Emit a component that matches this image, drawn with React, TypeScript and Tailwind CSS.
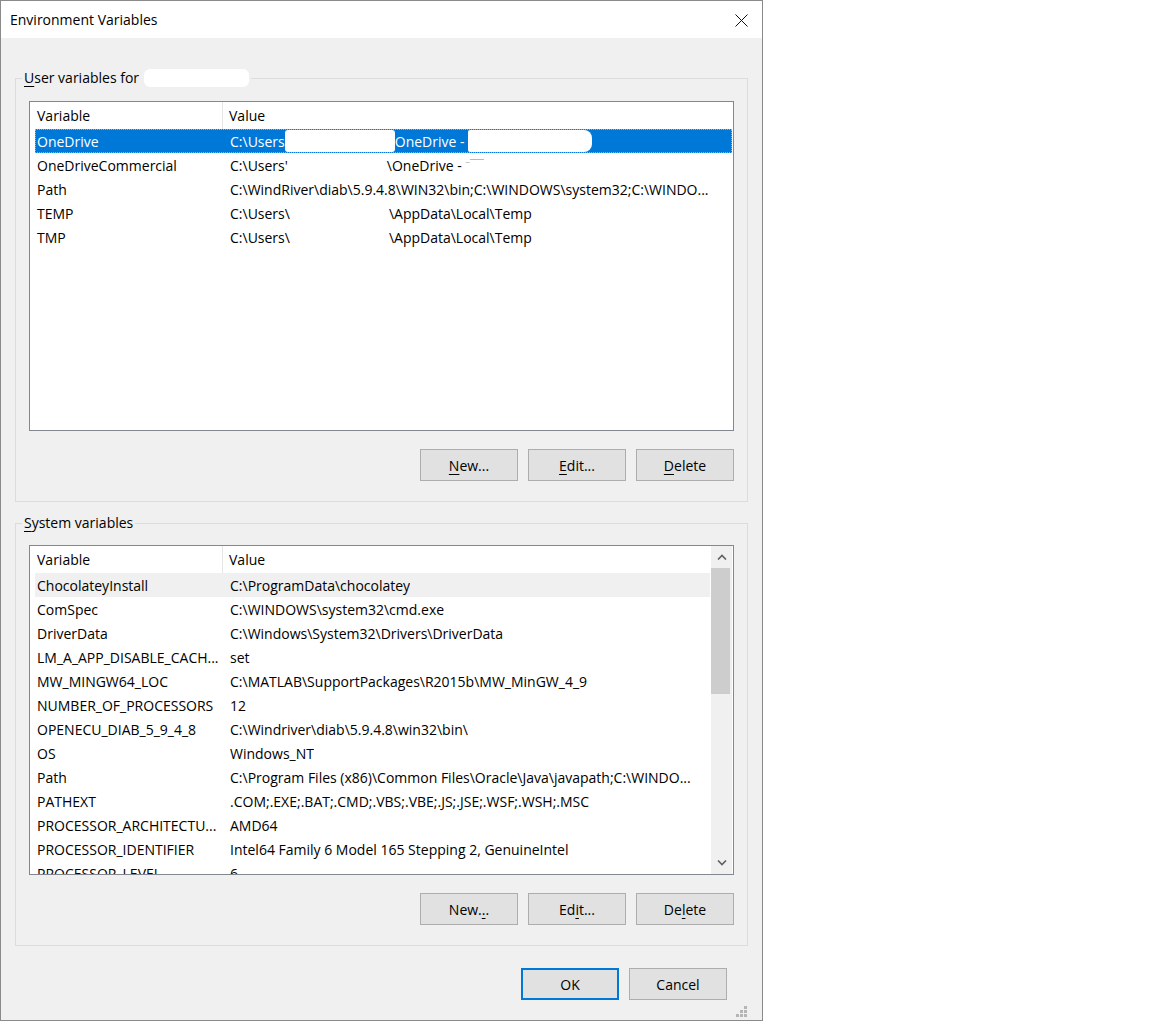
import React from "react";

type Row = { name: string; value: React.ReactNode };

const blob = (w: number) => <span className="inline-block" style={{ width: w }} />;

const userRows: Row[] = [
  {
    name: "OneDrive",
    value: (
      <span className="flex items-center">
        <span>C:\Users</span>
        <span className="inline-block h-[22px] w-[110px] rounded-[3px] bg-white" />
        <span>OneDrive -</span>
        <span className="ml-[3px] inline-block h-[22px] w-[124px] rounded-r-[8px] rounded-l-[2px] bg-white" />
      </span>
    ),
  },
  {
    name: "OneDriveCommercial",
    value: (
      <span className="flex items-center">
        <span>C:\Users'</span>
        {blob(99)}
        <span>\OneDrive - </span>
        <span className="text-[#b8b8b8]">&nbsp;⁻‾‾</span>
      </span>
    ),
  },
  { name: "Path", value: "C:\\WindRiver\\diab\\5.9.4.8\\WIN32\\bin;C:\\WINDOWS\\system32;C:\\WINDO..." },
  {
    name: "TEMP",
    value: (
      <span className="flex items-center">
        <span>C:\Users\</span>
        {blob(99)}
        <span>\AppData\Local\Temp</span>
      </span>
    ),
  },
  {
    name: "TMP",
    value: (
      <span className="flex items-center">
        <span>C:\Users\</span>
        {blob(99)}
        <span>\AppData\Local\Temp</span>
      </span>
    ),
  },
];

const sysRows: Row[] = [
  { name: "ChocolateyInstall", value: "C:\\ProgramData\\chocolatey" },
  { name: "ComSpec", value: "C:\\WINDOWS\\system32\\cmd.exe" },
  { name: "DriverData", value: "C:\\Windows\\System32\\Drivers\\DriverData" },
  { name: "LM_A_APP_DISABLE_CACH...", value: "set" },
  { name: "MW_MINGW64_LOC", value: "C:\\MATLAB\\SupportPackages\\R2015b\\MW_MinGW_4_9" },
  { name: "NUMBER_OF_PROCESSORS", value: "12" },
  { name: "OPENECU_DIAB_5_9_4_8", value: "C:\\Windriver\\diab\\5.9.4.8\\win32\\bin\\" },
  { name: "OS", value: "Windows_NT" },
  { name: "Path", value: "C:\\Program Files (x86)\\Common Files\\Oracle\\Java\\javapath;C:\\WINDO..." },
  { name: "PATHEXT", value: ".COM;.EXE;.BAT;.CMD;.VBS;.VBE;.JS;.JSE;.WSF;.WSH;.MSC" },
  { name: "PROCESSOR_ARCHITECTU...", value: "AMD64" },
  { name: "PROCESSOR_IDENTIFIER", value: "Intel64 Family 6 Model 165 Stepping 2, GenuineIntel" },
  { name: "PROCESSOR_LEVEL", value: "6" },
];

function Header() {
  return (
    <div className="flex h-[27px] shrink-0 items-center bg-white">
      <div className="flex h-full w-[193px] shrink-0 items-center border-r border-[#e5e5e5] pl-[7px]">Variable</div>
      <div className="pl-[6px]">Value</div>
    </div>
  );
}

function ListRow({ row, selected, hover }: { row: Row; selected?: boolean; hover?: boolean }) {
  return (
    <div
      className={
        "ml-[5px] mr-[1px] flex h-[24px] shrink-0 items-center whitespace-nowrap " +
        (selected
          ? "bg-[#0078d7] text-white outline outline-1 -outline-offset-1 outline-dotted outline-[#e3a45a]"
          : hover
          ? "bg-[#f0f0f0]"
          : "")
      }
    >
      <div className="w-[188px] shrink-0 overflow-hidden pl-[2px]">{row.name}</div>
      <div className="overflow-hidden pl-[7px]">{row.value}</div>
    </div>
  );
}

function Btn({ label, u, primary }: { label: string; u: number; primary?: boolean }) {
  return (
    <button
      className={
        "h-[32px] w-[98px] bg-[#e1e1e1] text-[14px] text-black " +
        (primary ? "border-2 border-[#0078d7]" : "border border-[#adadad]")
      }
    >
      {u >= 0 ? (
        <>
          {label.slice(0, u)}
          <span className="underline decoration-1 underline-offset-[3px]">{label[u]}</span>
          {label.slice(u + 1)}
        </>
      ) : (
        label
      )}
    </button>
  );
}

function Chevron({ up }: { up?: boolean }) {
  return (
    <svg width="10" height="6" viewBox="0 0 10 6">
      <polyline
        points={up ? "1,5.5 5,1.5 9,5.5" : "1,0.5 5,4.5 9,0.5"}
        fill="none"
        stroke="#606060"
        strokeWidth="1.6"
      />
    </svg>
  );
}

export default function App() {
  return (
    <div className="flex h-[1021px] w-[1152px] bg-white font-['Open_Sans','Noto_Sans',sans-serif] text-[14px] text-black">
      <div className="flex h-[1021px] w-[763px] flex-col border border-[#8a8a8a]">
        {/* title bar */}
        <div className="flex h-[37px] shrink-0 items-center justify-between bg-white pl-[9px] pr-[14px]">
          <span className="leading-none">Environment Variables</span>
          <svg width="13" height="13" viewBox="0 0 13 13" className="mt-[1px]">
            <path d="M0.5 0.5 L12.5 12.5 M12.5 0.5 L0.5 12.5" stroke="#111" strokeWidth="1" />
          </svg>
        </div>
        {/* body */}
        <div className="flex flex-1 flex-col bg-[#f0f0f0] px-[14px]">
          <fieldset className="mt-[30px] border border-[#dcdcdc] px-[13px] pb-[20px] pt-[13px]">
            <legend className="-ml-[7px] flex h-[20px] items-center px-[2px] leading-[20px]">
              <span>
                <span className="underline decoration-1 underline-offset-[3px]">U</span>ser variables for
              </span>
              <span className="ml-[5px] inline-block h-[18px] w-[105px] rounded-[6px] bg-white" />
            </legend>
            <div className="flex h-[330px] flex-col border border-[#828790] bg-white">
              <Header />
              {userRows.map((r, i) => (
                <ListRow key={i} row={r} selected={i === 0} />
              ))}
            </div>
            <div className="mt-[18px] flex justify-end gap-[10px]">
              <Btn label="New..." u={0} />
              <Btn label="Edit..." u={0} />
              <Btn label="Delete" u={0} />
            </div>
          </fieldset>

          <fieldset className="mt-[11px] border border-[#dcdcdc] px-[13px] pb-[20px] pt-[12px]">
            <legend className="-ml-[7px] h-[20px] px-[2px] leading-[20px]">
              <span className="underline decoration-1 underline-offset-[3px]">S</span>ystem variables
            </legend>
            <div className="flex h-[330px] border border-[#828790] bg-white">
              <div className="flex flex-1 flex-col overflow-hidden">
                <Header />
                {sysRows.map((r, i) => (
                  <ListRow key={i} row={r} hover={i === 0} />
                ))}
              </div>
              <div className="mr-[1px] flex w-[21px] shrink-0 flex-col bg-[#f0f0f0]">
                <div className="flex h-[22px] items-center justify-center">
                  <Chevron up />
                </div>
                <div className="h-[126px] w-[19px] bg-[#cdcdcd]" />
                <div className="flex-1" />
                <div className="flex h-[22px] items-center justify-center">
                  <Chevron />
                </div>
              </div>
            </div>
            <div className="mt-[18px] flex justify-end gap-[10px]">
              <Btn label="New..." u={4} />
              <Btn label="Edit..." u={2} />
              <Btn label="Delete" u={2} />
            </div>
          </fieldset>

          <div className="mt-[22px] flex justify-end gap-[10px] pr-[21px]">
            <Btn label="OK" u={-1} primary />
            <Btn label="Cancel" u={-1} />
          </div>
          <div className="flex flex-1 items-end justify-end pb-[3px] pr-[1px]">
            <svg width="11" height="11" viewBox="0 0 11 11">
              <rect x="8" y="0" width="3" height="3" fill="#b5b5b5" />
              <rect x="4" y="4" width="3" height="3" fill="#b5b5b5" />
              <rect x="8" y="4" width="3" height="3" fill="#b5b5b5" />
              <rect x="0" y="8" width="3" height="3" fill="#b5b5b5" />
              <rect x="4" y="8" width="3" height="3" fill="#b5b5b5" />
              <rect x="8" y="8" width="3" height="3" fill="#b5b5b5" />
            </svg>
          </div>
        </div>
      </div>
    </div>
  );
}
